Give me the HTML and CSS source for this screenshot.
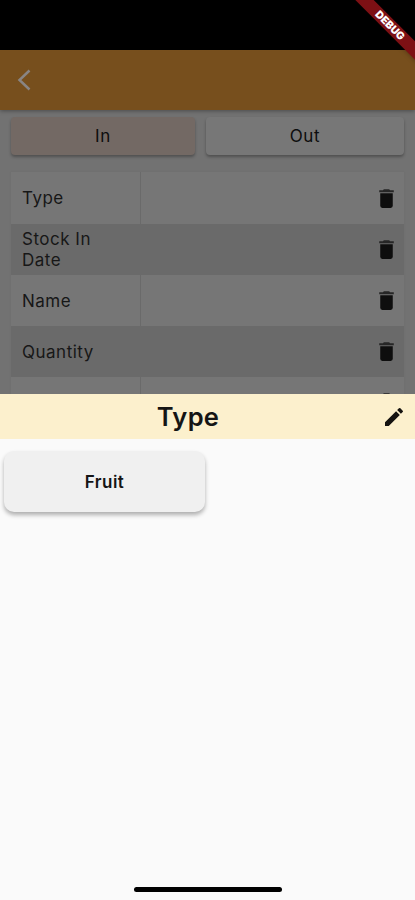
FILE: index.html
```html
<!DOCTYPE html>
<html lang="en">
<head>
    <meta charset="UTF-8">
    <meta name="viewport" content="width=device-width, initial-scale=1.0">
    <title>Stock</title>
    <link rel="stylesheet" href="styles.css">
</head>
<body>
    <svg class="sprite">
        <symbol id="trash" viewBox="0 0 24 24">
            <path d="M6 7h12v12a2 2 0 0 1-2 2H8a2 2 0 0 1-2-2z"/>
            <path class="lid" d="M19 4h-3.500l-1-1h-5l-1 1H5v2h14z"/>
        </symbol>
    </svg>
    <div class="phone">
        <div class="page">
            <div class="statusBar"></div>
            <header class="appBar">
                <svg class="back" viewBox="0 0 14 22"><path d="M12.500 1.500L2.500 11l10 9.500"/></svg>
            </header>
            <div class="tabs">
                <button class="tab active">In</button>
                <button class="tab">Out</button>
            </div>
            <div class="fields">
                <div class="row">
                    <div class="label">Type</div>
                    <div class="value"><svg class="trash"><use href="#trash"/></svg></div>
                </div>
                <div class="row">
                    <div class="label">Stock In Date</div>
                    <div class="value"><svg class="trash"><use href="#trash"/></svg></div>
                </div>
                <div class="row">
                    <div class="label">Name</div>
                    <div class="value"><svg class="trash"><use href="#trash"/></svg></div>
                </div>
                <div class="row">
                    <div class="label">Quantity</div>
                    <div class="value"><svg class="trash"><use href="#trash"/></svg></div>
                </div>
                <div class="row">
                    <div class="label"></div>
                    <div class="value"><svg class="trash"><use href="#trash"/></svg></div>
                </div>
            </div>
        </div>
        <div class="sheet">
            <div class="sheetHead">
                <h1>Type</h1>
                <svg class="edit" viewBox="0 0 24 24"><path d="M3 17.250V21h3.750L17.810 9.940l-3.750-3.750zM20.710 7.040a1 1 0 0 0 0-1.410l-2.340-2.340a1 1 0 0 0-1.410 0l-1.830 1.830 3.750 3.750z"/></svg>
            </div>
            <div class="options">
                <button class="option">Fruit</button>
            </div>
            <div class="homeBar"></div>
        </div>
        <div class="debug">DEBUG</div>
    </div>
</body>
</html>
```

FILE: styles.css
```css
* {
    box-sizing: border-box;
}

body {
    margin: 0;
    font-family: Inter, "Liberation Sans", sans-serif;
}

button {
    border: none;
    padding: 0;
    font-family: inherit;
}

.sprite {
    display: none;
}

.phone {
    position: relative;
    height: 900px;
    overflow: hidden;
    display: flex;
    flex-direction: column;
}

.page {
    height: 394px;
    overflow: hidden;
    background-color: #727272;
}

.statusBar {
    height: 50px;
    background-color: #000;
}

.appBar {
    height: 60px;
    padding-left: 17px;
    display: flex;
    align-items: center;
    background-color: #774f1d;
    box-shadow: 0 1px 4px rgba(0, 0, 0, 0.35);
}

.back {
    width: 14px;
    height: 22px;
    fill: none;
    stroke: #898584;
    stroke-width: 2.5;
}

.tabs {
    display: flex;
    gap: 11px;
    padding: 7px 11px 0;
}

.tab {
    flex: 198;
    height: 38px;
    border-radius: 4px;
    background-color: #777;
    color: #0d0d0d;
    font-size: 17px;
    letter-spacing: 0.7px;
    box-shadow: 0 2px 3px rgba(0, 0, 0, 0.3);
}

.tab.active {
    flex: 184;
    background-color: #736964;
}

.fields {
    margin: 17px 11px 0;
    box-shadow: 0 0 3px rgba(0, 0, 0, 0.05);
}

.row {
    display: flex;
    height: 51px;
    background-color: #767676;
}

.row:first-child {
    height: 52px;
}

.row:nth-child(even) {
    background-color: #6a6a6a;
}

.label {
    width: 130px;
    padding: 1px 30px 0 11px;
    display: flex;
    align-items: center;
    border-right: 1px solid #6a6a6a;
    color: #171717;
    font-size: 17px;
    line-height: 21px;
    letter-spacing: 0.5px;
}

.value {
    flex: 1;
    padding-right: 5px;
    display: flex;
    align-items: center;
    justify-content: flex-end;
}

.trash {
    width: 25px;
    height: 25px;
    fill: #0e0e0e;
}

.lid {
    fill: #262626;
}

.sheet {
    flex: 1;
    display: flex;
    flex-direction: column;
    background-color: #fafafa;
}

.sheetHead {
    height: 45px;
    padding-right: 9px;
    display: flex;
    align-items: center;
    background-color: #fcf0cd;
}

h1 {
    flex: 1;
    margin: 0;
    padding-right: 6px;
    text-align: center;
    color: #151515;
    font-size: 25.5px;
    font-weight: 600;
    letter-spacing: 0.3px;
}

.edit {
    width: 24px;
    height: 24px;
    fill: #151310;
}

.options {
    flex: 1;
    padding: 12px 4px;
}

.option {
    width: 201px;
    height: 61px;
    border-radius: 10px;
    background-color: #f0f0f0;
    color: #151515;
    font-size: 17px;
    font-weight: 600;
    letter-spacing: 0.5px;
    box-shadow: 0 3px 4px rgba(0, 0, 0, 0.3);
}

.homeBar {
    width: 148px;
    height: 5px;
    margin: 0 auto 8px;
    border-radius: 3px;
    background-color: #000;
}

/* corner ribbon over everything */
.debug {
    position: absolute;
    top: 19px;
    right: -35px;
    width: 120px;
    height: 13px;
    transform: rotate(45deg);
    background-color: #7d1014;
    color: #fff;
    font-size: 10.5px;
    font-weight: 900;
    line-height: 13px;
    text-align: center;
    box-shadow: 0 0 5px rgba(0, 0, 0, 0.35);
}
```
